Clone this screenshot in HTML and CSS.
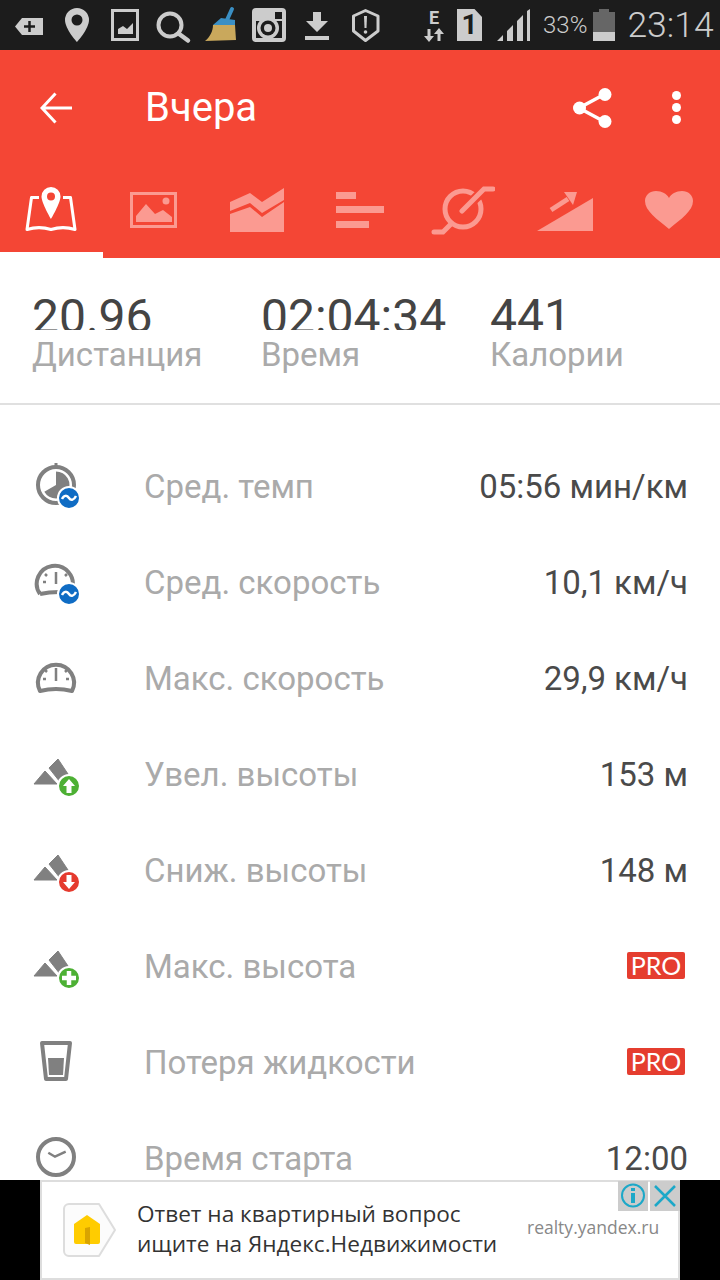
FILE: index.html
```html
<!DOCTYPE html>
<html lang="ru">
<head>
    <meta charset="UTF-8">
    <meta name="viewport" content="width=device-width, initial-scale=1.0">
    <title>Вчера</title>
    <link rel="stylesheet" href="styles.css">
</head>
<body>
    <div class="status-bar">
        <svg class="status-icon" viewBox="0 0 48 50"><path d="M10 26.5 17 18H38V35H17Z" fill="#ccc"/><path d="M19 26.5H30M24.5 21V32" stroke="#1c1c1c" stroke-width="2.5"/></svg>
        <svg class="status-icon" viewBox="0 0 48 50"><path fill-rule="evenodd" d="M24 8A12 12 0 0 0 12 20C12 29 24 42 24 42S36 29 36 20A12 12 0 0 0 24 8ZM24 14.5A5.5 5.5 0 1 1 24 25.5A5.5 5.5 0 0 1 24 14.5Z" fill="#ccc"/></svg>
        <svg class="status-icon" viewBox="0 0 48 50"><rect x="11.5" y="10.5" width="25" height="29" fill="none" stroke="#ccc" stroke-width="3"/><path d="M17 34V29L22 26 26 29 32 23V34Z" fill="#ccc"/></svg>
        <svg class="status-icon" viewBox="0 0 48 50"><circle cx="21" cy="25" r="11.5" fill="none" stroke="#ccc" stroke-width="4"/><path d="M29.5 33.5 39 40.5" stroke="#ccc" stroke-width="4.5" stroke-linecap="round"/></svg>
        <svg class="status-icon" viewBox="0 0 48 50"><path d="M35 9 30 20" stroke="#3a8fc4" stroke-width="4" stroke-linecap="round"/><path d="M16 25 24 18 38 20V25Z" fill="#3a8fc4"/><path d="M16 25H38L39 40 8 41C13 37 16 31 16 25Z" fill="#c9a85c"/></svg>
        <svg class="status-icon" viewBox="0 0 48 50"><rect x="7" y="8" width="34" height="34" rx="4" fill="#ccc"/><rect x="11" y="21" width="26" height="17" fill="#1c1c1c"/><circle cx="23" cy="28" r="11" fill="#ccc"/><circle cx="23" cy="28" r="7.5" fill="#1c1c1c"/><circle cx="23" cy="28" r="4" fill="#ccc"/><rect x="30" y="12" width="7" height="7" fill="#1c1c1c"/></svg>
        <svg class="status-icon" viewBox="0 0 48 50"><path d="M20 12H28V21H35L24 32 13 21H20Z" fill="#ccc"/><rect x="12" y="36" width="24" height="4" fill="#ccc"/></svg>
        <svg class="status-icon" viewBox="0 0 48 50"><path d="M24.5 10.5 37 16V31L24.5 40.5 12.5 31V16Z" fill="none" stroke="#ccc" stroke-width="3" stroke-linejoin="round"/><path d="M23 16H26L25.5 28H23.5Z" fill="#ccc"/><circle cx="24.5" cy="32" r="1.8" fill="#ccc"/></svg>
        <div class="status-right">
            <div class="net-type">
                <span class="net-letter">E</span>
                <svg class="net-arrows" viewBox="0 0 20 14"><path d="M5 14 0 8H3.5V1H6.5V8H10ZM15 0 20 6H16.5V13H13.5V6H10Z" fill="#ccc"/></svg>
            </div>
            <div class="sim">1</div>
            <svg class="signal" viewBox="0 0 46 50"><path d="M10 41 16 35V41ZM20 41V31L26 25V41ZM30 41V21L36 15V41ZM40 41V11L43 9V41Z" fill="#ccc"/></svg>
            <span class="battery-pct">33%</span>
            <div class="battery"><div class="battery-level"></div></div>
            <span class="clock">23:14</span>
        </div>
    </div>

    <header>
        <div class="toolbar">
            <svg class="back" viewBox="0 0 32 32"><path d="M15.5 1.5 2 16 15.5 30.5M2 16H32" fill="none" stroke="#fff" stroke-width="3"/></svg>
            <h1>Вчера</h1>
            <svg class="share" viewBox="0 0 40 40"><path d="M32 6 6 20 32 34" fill="none" stroke="#fff" stroke-width="3.5"/><circle cx="32" cy="6.5" r="6.5" fill="#fff"/><circle cx="6.5" cy="20" r="6.5" fill="#fff"/><circle cx="32" cy="33.5" r="6.5" fill="#fff"/></svg>
            <div class="more"><i></i><i></i><i></i></div>
        </div>
        <div class="tabs">
            <div class="tab active">
                <svg viewBox="0 0 64 64"><path d="M20 19.5H12.5L8 51.5C16 49 24 49 32 51.5 40 49 48 49 56 51.5L51.5 19.5H44" fill="none" stroke="#fff" stroke-width="3" stroke-linejoin="round"/><path fill-rule="evenodd" d="M32 9A9.5 9.5 0 0 0 22.5 18.5C22.5 25 32 41 32 41S41.5 25 41.5 18.5A9.5 9.5 0 0 0 32 9ZM32 14.5A4 4 0 1 1 32 22.5A4 4 0 0 1 32 14.5Z" fill="#fff"/></svg>
            </div>
            <div class="tab">
                <svg viewBox="0 0 64 64"><rect x="9.5" y="15.5" width="44" height="33" fill="none" stroke="#fb9a91" stroke-width="3"/><path d="M14 44V38L24 26 33 36 41 32 50 39V44Z" fill="#fb9a91"/><circle cx="44" cy="23" r="3.5" fill="#fb9a91"/></svg>
            </div>
            <div class="tab">
                <svg viewBox="0 0 64 64"><path d="M5 24 25 15 37 24 59 10V22L37 35 25 25 5 33Z" fill="#fb9a91"/><path d="M5 36 25 29 37 39 59 24V54H5Z" fill="#fb9a91"/></svg>
            </div>
            <div class="tab">
                <svg viewBox="0 0 64 64"><path d="M8 14H28V21H8ZM8 28H56V35H8ZM8 43H41V50H8Z" fill="#fb9a91"/></svg>
            </div>
            <div class="tab">
                <svg viewBox="0 0 64 64"><circle cx="32" cy="31" r="18" fill="none" stroke="#fb9a91" stroke-width="5"/><path d="M31 33 54 11" stroke="#f44635" stroke-width="10"/><path d="M31 33 53 11H62M3 54H12L19 47" fill="none" stroke="#fb9a91" stroke-width="5" stroke-linecap="round"/></svg>
            </div>
            <div class="tab">
                <svg viewBox="0 0 64 64"><path d="M3 53H59V20Z" fill="#fb9a91"/><path d="M17 32 34 21" stroke="#fb9a91" stroke-width="5"/><path d="M30 14H43L39 27Z" fill="#fb9a91"/></svg>
            </div>
            <div class="tab">
                <svg viewBox="0 0 64 64"><path d="M32 51C20 41 8 33 8 23 8 17 13 13 19 13 25 13 30 16 32 20 34 16 39 13 45 13 51 13 56 17 56 23 56 33 44 41 32 51Z" fill="#fb9a91"/></svg>
            </div>
        </div>
    </header>

    <section class="stats">
        <div class="stat">
            <div class="stat-value">20.96</div>
            <div class="stat-label">Дистанция</div>
        </div>
        <div class="stat">
            <div class="stat-value">02:04:34</div>
            <div class="stat-label">Время</div>
        </div>
        <div class="stat">
            <div class="stat-value">441</div>
            <div class="stat-label">Калории</div>
        </div>
    </section>

    <ul class="details">
        <li class="row">
            <svg class="row-icon" viewBox="0 0 48 48">
                <circle cx="23" cy="22" r="18" fill="none" stroke="#808080" stroke-width="4"/>
                <path d="M23 22V8.5A13.5 13.5 0 1 1 11.3 28.75Z" fill="#808080"/>
                <rect x="21.5" y="0" width="3" height="4" fill="#808080"/>
                <circle cx="36" cy="35" r="11" fill="#0f6cc4" stroke="#fff" stroke-width="2"/>
                <path d="M29 36C31 32 34 32 36 35S41 37 43 33" fill="none" stroke="#fff" stroke-width="2.5"/>
            </svg>
            <span class="row-label">Сред. темп</span>
            <span class="row-value">05:56 мин/км</span>
        </li>
        <li class="row">
            <svg class="row-icon" viewBox="0 0 48 48">
                <path d="M7 35A18 18 0 1 1 39 30M7 35Q16 33 26 33" fill="none" stroke="#808080" stroke-width="4"/>
                <path d="M23 13V25M10 23H13M12 15 14 17M34 15 32 17" stroke="#808080" stroke-width="2.5" fill="none"/>
                <circle cx="36" cy="35" r="11" fill="#0f6cc4" stroke="#fff" stroke-width="2"/>
                <path d="M29 36C31 32 34 32 36 35S41 37 43 33" fill="none" stroke="#fff" stroke-width="2.5"/>
            </svg>
            <span class="row-label">Сред. скорость</span>
            <span class="row-value">10,1 км/ч</span>
        </li>
        <li class="row">
            <svg class="row-icon" viewBox="0 0 48 48">
                <path d="M7 36A18 18 0 1 1 39 36Q23 32 7 36Z" fill="none" stroke="#808080" stroke-width="4" stroke-linejoin="round"/>
                <path d="M23 13V26M10 24H13M36 24H33M12 15 14 17M34 15 32 17" stroke="#808080" stroke-width="2.5" fill="none"/>
            </svg>
            <span class="row-label">Макс. скорость</span>
            <span class="row-value">29,9 км/ч</span>
        </li>
        <li class="row">
            <svg class="row-icon" viewBox="0 0 48 48">
                <path d="M1 33 12 20 24 33ZM16 17 25 8 37 26 27 31Z" fill="#808080" stroke="#808080" stroke-linejoin="round"/>
                <circle cx="36" cy="35" r="11" fill="#4db034" stroke="#fff" stroke-width="2"/>
                <path d="M36 28 42 35H38.5V42H33.5V35H30Z" fill="#fff"/>
            </svg>
            <span class="row-label">Увел. высоты</span>
            <span class="row-value">153 м</span>
        </li>
        <li class="row">
            <svg class="row-icon" viewBox="0 0 48 48">
                <path d="M1 33 12 20 24 33ZM16 17 25 8 37 26 27 31Z" fill="#808080" stroke="#808080" stroke-linejoin="round"/>
                <circle cx="36" cy="35" r="11" fill="#e53a2e" stroke="#fff" stroke-width="2"/>
                <path d="M36 42 42 35H38.5V28H33.5V35H30Z" fill="#fff"/>
            </svg>
            <span class="row-label">Сниж. высоты</span>
            <span class="row-value">148 м</span>
        </li>
        <li class="row">
            <svg class="row-icon" viewBox="0 0 48 48">
                <path d="M1 33 12 20 24 33ZM16 17 25 8 37 26 27 31Z" fill="#808080" stroke="#808080" stroke-linejoin="round"/>
                <circle cx="36" cy="35" r="11" fill="#4db034" stroke="#fff" stroke-width="2"/>
                <path d="M29 35H43M36 28V42" stroke="#fff" stroke-width="4.5"/>
            </svg>
            <span class="row-label">Макс. высота</span>
            <span class="pro">PRO</span>
        </li>
        <li class="row">
            <svg class="row-icon" viewBox="0 0 48 48">
                <path d="M9 4H37L33 40H13Z" fill="none" stroke="#808080" stroke-width="4" stroke-linejoin="round"/>
                <path d="M15 19H31L30 36H16Z" fill="#808080"/>
            </svg>
            <span class="row-label">Потеря жидкости</span>
            <span class="pro">PRO</span>
        </li>
        <li class="row">
            <svg class="row-icon" viewBox="0 0 48 48">
                <circle cx="23" cy="22" r="18" fill="none" stroke="#808080" stroke-width="4"/>
                <path d="M15.3 17.7 22 21.7 32.7 16.7" fill="none" stroke="#808080" stroke-width="2.5"/>
            </svg>
            <span class="row-label">Время старта</span>
            <span class="row-value">12:00</span>
        </li>
    </ul>

    <div class="ad-strip">
        <div class="ad">
            <svg class="ad-logo" viewBox="0 0 56 56">
                <path d="M8 2H38L54 28 38 54H8A5 5 0 0 1 3 49V7A5 5 0 0 1 8 2Z" fill="#fcfcfc" stroke="#ddd" stroke-width="2" stroke-linejoin="round"/>
                <path d="M26 13 39 22V40A2 2 0 0 1 37 42H15A2 2 0 0 1 13 40V22Z" fill="#fc0"/>
                <path d="M24 26 29 25V43L24 41Z" fill="#d9a400"/>
            </svg>
            <p class="ad-text">Ответ на квартирный вопрос<br>ищите на Яндекс.Недвижимости</p>
            <span class="ad-domain">realty.yandex.ru</span>
            <div class="ad-buttons">
                <div class="ad-btn">
                    <svg viewBox="0 0 30 30"><circle cx="15" cy="14.5" r="11" fill="none" stroke="#1ca8c8" stroke-width="2"/><path d="M13 12H17V22H13ZM13 7H17V10H13Z" fill="#1ca8c8"/></svg>
                </div>
                <div class="ad-btn">
                    <svg viewBox="0 0 30 30"><path d="M5 5 25 25M25 5 5 25" stroke="#1ca8c8" stroke-width="2.5"/></svg>
                </div>
            </div>
        </div>
    </div>
</body>
</html>
```

FILE: styles.css
```css
body {
    margin: 0;
    width: 720px;
    height: 1280px;
    display: flex;
    flex-direction: column;
    overflow: hidden;
    background-color: #fff;
    font-family: Roboto, sans-serif;
}

/* status bar */
.status-bar {
    flex: none;
    height: 50px;
    display: flex;
    padding-left: 5px;
    background-color: #1c1c1c;
    color: #ccc;
}
.status-icon {
    width: 48px;
    height: 50px;
}
.status-right {
    display: flex;
    align-items: center;
    margin-left: 28px;
}
.net-type {
    width: 34px;
    display: flex;
    flex-direction: column;
    align-items: center;
}
.net-letter {
    font-size: 18px;
    font-weight: 700;
    line-height: 17px;
}
.net-arrows {
    width: 20px;
    height: 14px;
    margin-top: 2px;
}
.sim {
    width: 25px;
    height: 32px;
    margin: 0 5px 0 6px;
    background-color: #ccc;
    clip-path: polygon(0 0, 70% 0, 100% 25%, 100% 100%, 0 100%);
    color: #1c1c1c;
    font-size: 28px;
    font-weight: 700;
    line-height: 32px;
    text-align: center;
}
.signal {
    width: 46px;
    height: 50px;
}
.battery-pct {
    margin-left: 10px;
    font-size: 24px;
    font-weight: 300;
}
.battery {
    position: relative;
    width: 22px;
    height: 29px;
    margin: 3px 0 0 6px;
    background-color: #666;
}
.battery::before {
    content: "";
    position: absolute;
    top: -3px;
    left: 6px;
    width: 10px;
    height: 3px;
    background-color: #666;
}
.battery-level {
    height: 9px;
    margin-top: 20px;
    background-color: #ccc;
}
.clock {
    margin-left: 12px;
    font-size: 35.5px;
    font-weight: 300;
}

/* red header */
header {
    flex: none;
    height: 208px;
    background-color: #f44635;
    color: #fff;
}
.toolbar {
    height: 115px;
    display: flex;
    align-items: center;
}
.back {
    width: 32px;
    height: 32px;
    margin-left: 40px;
}
h1 {
    flex: 1;
    margin: 0 0 0 73px;
    font-size: 40px;
    font-weight: 400;
}
.share {
    width: 40px;
    height: 40px;
    margin-right: 59px;
}
.more {
    display: flex;
    flex-direction: column;
    gap: 3px;
    margin-right: 39px;
}
.more i {
    display: block;
    width: 9px;
    height: 9px;
    border-radius: 50%;
    background-color: #fff;
}
.tabs {
    display: flex;
    height: 93px;
}
.tab {
    flex: 1;
    display: flex;
    justify-content: center;
    padding-top: 13px;
    box-sizing: border-box;
}
.tab svg {
    width: 64px;
    height: 64px;
}
.tab.active {
    border-bottom: 6px solid #fff;
}

/* summary */
.stats {
    flex: none;
    height: 145px;
    display: flex;
    padding-left: 32px;
    border-bottom: 2px solid #e0e0e0;
}
.stat {
    width: 229px;
    padding-top: 36px;
}
.stat-value {
    height: 36px;
    overflow: hidden;
    color: #444;
    font-size: 48px;
    line-height: 45px;
}
.stat-label {
    margin-top: 6px;
    color: #aaa;
    font-size: 33px;
    line-height: 38px;
}

/* list */
.details {
    flex: 1;
    min-height: 0;
    overflow: hidden;
    margin: 0;
    padding: 34px 32px 0 33px;
    list-style: none;
}
.row {
    height: 96px;
    display: flex;
    align-items: center;
}
.row-icon {
    flex: none;
    width: 48px;
    height: 48px;
}
.row-label {
    flex: 1;
    margin: 0 0 1px 63px;
    color: #aaa;
    font-size: 33px;
}
.row-value {
    margin-bottom: 1px;
    color: #4a4a4a;
    font-size: 33px;
}
.pro {
    width: 58px;
    height: 27px;
    margin: 0 3px 3px 0;
    border-radius: 2px;
    background-color: #e53d2f;
    color: #fff;
    font-family: Lato, sans-serif;
    font-size: 25px;
    line-height: 27px;
    text-align: center;
}

/* ad banner */
.ad-strip {
    flex: none;
    height: 100px;
    padding: 0 40px;
    background-color: #000;
}
.ad {
    position: relative;
    height: 100px;
    box-sizing: border-box;
    display: flex;
    align-items: center;
    border: 2px solid #ddd;
    background-color: #fff;
    font-family: "Open Sans", sans-serif;
}
.ad-logo {
    flex: none;
    width: 56px;
    height: 56px;
    margin-left: 19px;
}
.ad-text {
    width: 390px;
    margin: 0 0 2px 20px;
    color: #333;
    font-size: 22.6px;
    line-height: 30px;
    white-space: nowrap;
}
.ad-domain {
    margin-bottom: 6px;
    color: #888;
    font-size: 17.5px;
}
.ad-buttons {
    position: absolute;
    top: -1px;
    right: -2px;
    display: flex;
    gap: 2px;
}
.ad-btn {
    width: 30px;
    height: 30px;
    background-color: #ccc;
}
.ad-btn svg {
    display: block;
    width: 30px;
    height: 30px;
}
```
